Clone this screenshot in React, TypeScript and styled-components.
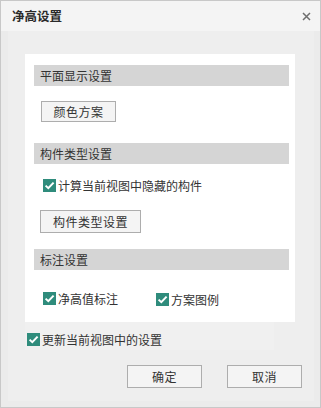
import React from "react";
import styled, { createGlobalStyle } from "styled-components";

const Global = createGlobalStyle`
  html, body { margin: 0; padding: 0; background: #ffffff; }
  * { box-sizing: border-box; }
  body { font-family: "Noto Sans CJK SC", "Noto Sans", sans-serif; }
`;

const Window = styled.div`
  width: 321px;
  height: 408px;
  border: 1px solid #c8c8c8;
  background: #ebebeb;
  display: flex;
  flex-direction: column;
  font-size: 12px;
  color: #333;
`;

const TitleBar = styled.div`
  height: 30px;
  flex: none;
  background: #f4f4f4;
  display: flex;
  align-items: center;
  justify-content: space-between;
  padding: 0 9px 0 11px;
`;

const Title = styled.div`
  font-size: 12.5px;
  font-weight: bold;
  color: #2a2a2a;
  line-height: 1;
  margin-top: 1px;
`;

const Close = styled.div`
  width: 10px;
  height: 10px;
  display: flex;
  align-items: center;
  justify-content: center;
`;

const Frame = styled.div`
  flex: 1;
  padding: 0 6px 6px 7px;
  display: flex;
`;

const Content = styled.div`
  flex: 1;
  background: #eeeeee;
  display: flex;
  flex-direction: column;
  padding: 23px 0 0 17px;
`;

const Panel = styled.div`
  width: 270px;
  height: 268px;
  background: #ffffff;
  padding: 11px 6px 0 9px;
  display: flex;
  flex-direction: column;
  align-items: flex-start;
`;

const Header = styled.div<{ $mt?: number }>`
  align-self: stretch;
  height: 21px;
  background: #d5d5d5;
  display: flex;
  align-items: center;
  padding-left: 6px;
  margin-top: ${(p) => p.$mt ?? 0}px;
  font-size: 12px;
  color: #333;
`;

const Button = styled.button<{ $w: number; $h: number; $mt?: number; $ml?: number }>`
  width: ${(p) => p.$w}px;
  height: ${(p) => p.$h}px;
  margin-top: ${(p) => p.$mt ?? 0}px;
  margin-left: ${(p) => p.$ml ?? 0}px;
  border: 1px solid #adadad;
  background: #f4f4f4;
  font-family: "Noto Sans CJK SC", "Noto Sans", sans-serif;
  font-size: 12px;
  color: #333;
  padding: 0;
  display: flex;
  align-items: center;
  justify-content: center;
  letter-spacing: 0.5px;
`;

const CheckRow = styled.div<{ $mt?: number; $ml?: number }>`
  display: flex;
  align-items: center;
  gap: 2px;
  margin-top: ${(p) => p.$mt ?? 0}px;
  margin-left: ${(p) => p.$ml ?? 0}px;
  font-size: 12px;
  color: #333;
  line-height: 13px;
`;

const Box = styled.span`
  width: 13px;
  height: 13px;
  background: #2f8c7c;
  display: inline-flex;
  align-items: center;
  justify-content: center;
  flex: none;
`;

const Inline = styled.div<{ $mt?: number }>`
  display: flex;
  align-items: flex-start;
  margin-top: ${(p) => p.$mt ?? 0}px;
`;

const UpdateStrip = styled.div`
  width: 249px;
  height: 28px;
  background: #f0f0f0;
  display: flex;
  align-items: flex-start;
  padding: 11px 0 0 2px;
`;

const Footer = styled.div`
  display: flex;
  gap: 25px;
  padding-left: 102px;
  margin-top: 15px;
`;

const Check = () => (
  <Box>
    <svg width="11" height="11" viewBox="0 0 11 11">
      <path d="M1.6 5.6 L4.3 8.2 L9.6 2.6" fill="none" stroke="#ffffff" strokeWidth="2" />
    </svg>
  </Box>
);

const Checkbox = ({ label, mt, ml }: { label: string; mt?: number; ml?: number }) => (
  <CheckRow $mt={mt} $ml={ml}>
    <Check />
    <span>{label}</span>
  </CheckRow>
);

export default function App() {
  return (
    <>
      <Global />
      <Window>
        <TitleBar>
          <Title>净高设置</Title>
          <Close>
            <svg width="9" height="9" viewBox="0 0 9 9">
              <path d="M1 1 L8 8 M8 1 L1 8" stroke="#6e6e6e" strokeWidth="1.5" />
            </svg>
          </Close>
        </TitleBar>
        <Frame>
          <Content>
            <Panel>
              <Header>平面显示设置</Header>
              <Button $w={75} $h={21} $mt={15} $ml={7}>颜色方案</Button>
              <Header $mt={21}>构件类型设置</Header>
              <Checkbox label="计算当前视图中隐藏的构件" mt={15} ml={9} />
              <Button $w={101} $h={23} $mt={18} $ml={6}>构件类型设置</Button>
              <Header $mt={16}>标注设置</Header>
              <Inline $mt={22}>
                <Checkbox label="净高值标注" ml={9} />
                <Checkbox label="方案图例" mt={1} ml={38} />
              </Inline>
            </Panel>
            <UpdateStrip>
              <Checkbox label="更新当前视图中的设置" />
            </UpdateStrip>
            <Footer>
              <Button $w={75} $h={23}>确定</Button>
              <Button $w={75} $h={23}>取消</Button>
            </Footer>
          </Content>
        </Frame>
      </Window>
    </>
  );
}
